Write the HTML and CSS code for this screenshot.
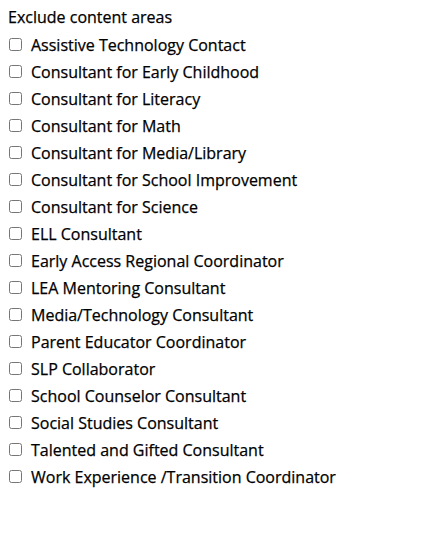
FILE: index.html
```html
<!DOCTYPE html>
<html>
<head>
<meta charset="utf-8">
<link rel="stylesheet" href="styles.css">
</head>
<body>
<div class="group">
  <div class="title">Exclude content areas</div>
  <label class="row"><input type="checkbox"><span>Assistive Technology Contact</span></label>
  <label class="row"><input type="checkbox"><span>Consultant for Early Childhood</span></label>
  <label class="row"><input type="checkbox"><span>Consultant for Literacy</span></label>
  <label class="row"><input type="checkbox"><span>Consultant for Math</span></label>
  <label class="row"><input type="checkbox"><span>Consultant for Media/Library</span></label>
  <label class="row"><input type="checkbox"><span>Consultant for School Improvement</span></label>
  <label class="row"><input type="checkbox"><span>Consultant for Science</span></label>
  <label class="row"><input type="checkbox"><span>ELL Consultant</span></label>
  <label class="row"><input type="checkbox"><span>Early Access Regional Coordinator</span></label>
  <label class="row"><input type="checkbox"><span>LEA Mentoring Consultant</span></label>
  <label class="row"><input type="checkbox"><span>Media/Technology Consultant</span></label>
  <label class="row"><input type="checkbox"><span>Parent Educator Coordinator</span></label>
  <label class="row"><input type="checkbox"><span>SLP Collaborator</span></label>
  <label class="row"><input type="checkbox"><span>School Counselor Consultant</span></label>
  <label class="row"><input type="checkbox"><span>Social Studies Consultant</span></label>
  <label class="row"><input type="checkbox"><span>Talented and Gifted Consultant</span></label>
  <label class="row"><input type="checkbox"><span>Work Experience /Transition Coordinator</span></label>
</div>
</body>
</html>
```
FILE: styles.css
```css
body {
  margin: 0;
  font-family: "Open Sans", sans-serif;
  color: #000;
  background: #fff;
  -webkit-text-stroke: 0.25px #000;
}
.group {
  padding: 7px 8px;
  display: flex;
  flex-direction: column;
}
.title {
  font-size: 16px;
  line-height: 21px;
  margin-bottom: 3px;
}
.row {
  display: flex;
  align-items: center;
  height: 27px;
  font-size: 16px;
}
.row input {
  margin: 0 9px 0 1px;
  width: 13px;
  height: 13px;
}
```
